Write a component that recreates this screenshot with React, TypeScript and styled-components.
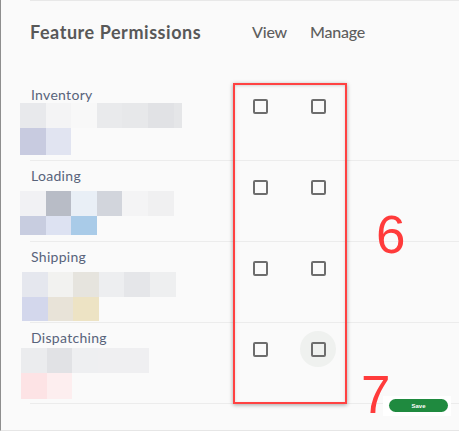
import React from "react";
import styled, { createGlobalStyle } from "styled-components";

const Global = createGlobalStyle`
  html, body { margin: 0; padding: 0; background: #ffffff; }
  body { font-family: Lato, "Open Sans", sans-serif; }
`;

const Page = styled.div`
  position: relative;
  width: 459px;
  height: 435px;
  background: #ffffff;
  overflow: hidden;
`;

const Panel = styled.div`
  height: 431px;
  box-sizing: border-box;
  background: #fafafa;
  border-left: 1px solid #8e8e8e;
  border-bottom: 1px solid #e6e6e6;
  padding-left: 29px;
`;

const Grid = styled.div`
  display: grid;
  grid-template-columns: 212px 58px 1fr;
`;

const Header = styled(Grid)`
  height: 80px;
  box-sizing: border-box;
  border-top: 1px solid #e8e8e8;
  padding-top: 19px;
`;

const Title = styled.div`
  font-family: Lato, sans-serif;
  font-weight: 700;
  font-size: 18px;
  line-height: 24px;
  color: #585858;
  letter-spacing: 0.55px;
`;

const ColHead = styled.div`
  font-family: Lato, sans-serif;
  font-weight: 500;
  font-size: 16px;
  line-height: 24px;
  color: #5e5e5e;
  padding-left: 10px;
  letter-spacing: -0.2px;
`;

const Row = styled(Grid)`
  height: 81px;
  box-sizing: border-box;
  border-bottom: 1px solid #ececec;
`;

const LabelCell = styled.div`
  padding-top: 7px;
  display: flex;
  flex-direction: column;
`;

const Label = styled.div`
  font-family: Lato, sans-serif;
  font-size: 14px;
  line-height: 16px;
  color: #58637a;
  padding-left: 1px;
  letter-spacing: 0.3px;
`;

const Blur = styled.div<{ $top: number; $shift: number }>`
  margin-top: ${(p) => p.$top}px;
  margin-left: ${(p) => p.$shift}px;
  display: flex;
  flex-direction: column;
`;

const BlurLine = styled.div<{ $h: number }>`
  display: flex;
  height: ${(p) => p.$h}px;
`;

const Pix = styled.div<{ $c: string; $w?: number }>`
  width: ${(p) => p.$w ?? 25.6}px;
  height: 100%;
  background: ${(p) => p.$c};
`;

const CheckCell = styled.div`
  padding-top: 8px;
`;

const CheckWrap = styled.div<{ $hover?: boolean }>`
  width: 36px;
  height: 36px;
  border-radius: 50%;
  display: flex;
  align-items: center;
  justify-content: center;
  background: ${(p) => (p.$hover ? "#eff1ef" : "transparent")};
`;

const Box = styled.div`
  width: 15px;
  height: 15px;
  box-sizing: border-box;
  border: 2px solid #6d6d6d;
  border-radius: 2px;
`;

const Highlight = styled.div`
  position: absolute;
  left: 233px;
  top: 83px;
  width: 114px;
  height: 321px;
  box-sizing: border-box;
  border: 2px solid #ff4242;
  box-shadow: 0 1px 4px rgba(0, 0, 0, 0.35), inset 0 1px 3px rgba(0, 0, 0, 0.15);
`;

const Marker = styled.div<{ $x: number; $y: number }>`
  position: absolute;
  left: ${(p) => p.$x}px;
  top: ${(p) => p.$y}px;
  font-family: "Liberation Sans", Arial, sans-serif;
  font-size: 53px;
  line-height: 53px;
  color: #ff3b3b;
`;

const SaveArea = styled.div`
  position: absolute;
  left: 383px;
  top: 396px;
  width: 68px;
  height: 20px;
  box-sizing: border-box;
  background: #ffffff;
  padding: 3px 3px 4px 6px;
`;

const SaveButton = styled.div`
  width: 59px;
  height: 13px;
  border-radius: 7px;
  background: #1f8a3f;
  color: #ffffff;
  font-family: "Liberation Sans", Arial, sans-serif;
  font-size: 6px;
  font-weight: 700;
  display: flex;
  align-items: center;
  justify-content: center;
`;

type Feature = {
  name: string;
  top: number;
  shift: number;
  lines: { h: number; cells: (string | [string, number])[] }[];
  hover?: boolean;
};

const features: Feature[] = [
  {
    name: "Inventory",
    top: 0,
    shift: -10,
    lines: [
      {
        h: 25.3,
        cells: ["#e8e9ec", "#f4f4f5", "#f8f8f8", "#e9eaec", "#e7e8ea", "#e1e2e5", ["#e5e6e8", 8]],
      },
      { h: 26.7, cells: ["#c8cbe0", "#e1e4f1"] },
    ],
  },
  {
    name: "Loading",
    top: 6.7,
    shift: -10,
    lines: [
      { h: 25, cells: ["#f1f1f4", "#b8bcc6", "#e9eff6", "#d2d5dc", "#f4f4f5", "#f0f0f1"] },
      { h: 19.6, cells: ["#c8cde0", "#dde2f2", "#a9cbe8"] },
    ],
  },
  {
    name: "Shipping",
    top: 6.7,
    shift: -8,
    lines: [
      { h: 25, cells: ["#e5e7ee", "#f2f2f0", "#e6e4de", "#edeef0", "#e5e6e9", "#eeeff0"] },
      { h: 24, cells: ["#d3d7ec", "#e8e3d8", "#ede3c4"] },
    ],
  },
  {
    name: "Dispatching",
    top: 1.7,
    shift: -9,
    hover: true,
    lines: [
      { h: 25, cells: ["#ebecee", "#e1e2e5", "#eeeff1", "#efeff1", "#efeff1"] },
      { h: 26.7, cells: ["#fde3e5", "#fdeeef"] },
    ],
  },
];

export default function App() {
  return (
    <Page>
      <Global />
      <Panel>
        <Header>
          <Title>Feature Permissions</Title>
          <ColHead>View</ColHead>
          <ColHead>Manage</ColHead>
        </Header>
        {features.map((f) => (
          <Row key={f.name}>
            <LabelCell>
              <Label>{f.name}</Label>
              <Blur $top={f.top} $shift={f.shift}>
                {f.lines.map((l, i) => (
                  <BlurLine key={i} $h={l.h}>
                    {l.cells.map((c, j) =>
                      Array.isArray(c) ? (
                        <Pix key={j} $c={c[0]} $w={c[1]} />
                      ) : (
                        <Pix key={j} $c={c} />
                      )
                    )}
                  </BlurLine>
                ))}
              </Blur>
            </LabelCell>
            <CheckCell>
              <CheckWrap>
                <Box />
              </CheckWrap>
            </CheckCell>
            <CheckCell>
              <CheckWrap $hover={f.hover}>
                <Box />
              </CheckWrap>
            </CheckCell>
          </Row>
        ))}
      </Panel>
      <Highlight />
      <Marker $x={376} $y={208}>6</Marker>
      <Marker $x={361} $y={368}>7</Marker>
      <SaveArea>
        <SaveButton>Save</SaveButton>
      </SaveArea>
    </Page>
  );
}
